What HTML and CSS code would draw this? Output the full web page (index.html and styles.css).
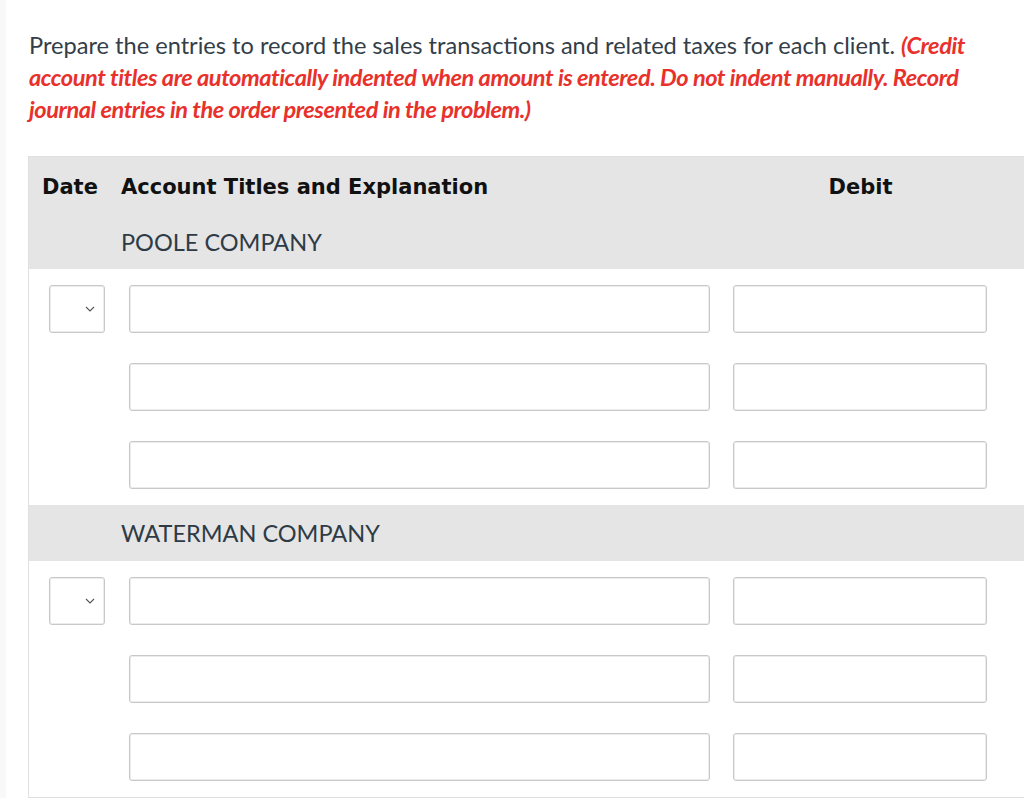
FILE: index.html
```html
<!DOCTYPE html>
<html lang="en">
<head>
<meta charset="utf-8">
<title>Journal entries</title>
<link rel="stylesheet" href="styles.css">
</head>
<body>
<div class="page">
  <p class="instructions">Prepare the entries to record the sales transactions and related taxes for each client. <em class="note">(Credit account titles are automatically indented when amount is entered. Do not indent manually. Record journal entries in the order presented in the problem.)</em></p>

  <div class="journal">
    <div class="head">
      <div class="grid labels">
        <div class="h-date">Date</div>
        <div class="h-account">Account Titles and Explanation</div>
        <div class="h-debit">Debit</div>
        <div class="h-credit">Credit</div>
      </div>
      <div class="company">POOLE COMPANY</div>
    </div>
    <div class="rows">
      <div class="grid row">
        <div class="select"><svg class="chev" viewBox="0 0 10 6" width="10" height="6"><path d="M1 1 L5 5 L9 1" fill="none" stroke="#555" stroke-width="1.1"/></svg></div>
        <div class="box"></div><div class="box"></div><div class="box"></div>
      </div>
      <div class="grid row">
        <div></div>
        <div class="box"></div><div class="box"></div><div class="box"></div>
      </div>
      <div class="grid row">
        <div></div>
        <div class="box"></div><div class="box"></div><div class="box"></div>
      </div>
    </div>
    <div class="section">
      <div class="company">WATERMAN COMPANY</div>
    </div>
    <div class="rows">
      <div class="grid row">
        <div class="select"><svg class="chev" viewBox="0 0 10 6" width="10" height="6"><path d="M1 1 L5 5 L9 1" fill="none" stroke="#555" stroke-width="1.1"/></svg></div>
        <div class="box"></div><div class="box"></div><div class="box"></div>
      </div>
      <div class="grid row">
        <div></div>
        <div class="box"></div><div class="box"></div><div class="box"></div>
      </div>
      <div class="grid row">
        <div></div>
        <div class="box"></div><div class="box"></div><div class="box"></div>
      </div>
    </div>
  </div>
</div>
</body>
</html>
```

FILE: styles.css
```css
html, body {
  margin: 0;
  padding: 0;
  background: #ffffff;
}
body {
  overflow: hidden;
  border-left: 6px solid #f8f8f8;
}
.page {
  padding: 29px 0 0 22px;
  width: 1200px;
}
.instructions {
  margin: 0 0 31px 1px;
  width: 948px;
  font-family: Lato, "Liberation Sans", sans-serif;
  font-size: 23.6px;
  line-height: 32px;
  color: #333e48;
}
.note {
  font-style: italic;
  font-weight: bold;
  color: #e8312b;
  letter-spacing: -0.45px;
}
.journal {
  border: 1px solid #e0e0e0;
  width: 1100px;
}
.head, .section {
  background: #e5e5e5;
}
.grid {
  display: grid;
  grid-template-columns: 56px 581px 253px 253px;
  column-gap: 24px;
  padding-left: 20px;
}
.labels {
  height: 57px;
  align-items: center;
  padding-top: 1px;
  font-family: "DejaVu Sans", Verdana, sans-serif;
  font-weight: bold;
  font-size: 21px;
  color: #111111;
}
.h-date { margin-left: -7px; }
.h-account { margin-left: -8px; white-space: nowrap; }
.h-debit, .h-credit { text-align: center; }
.h-credit { margin-left: 14px; }
.company {
  height: 54px;
  display: flex;
  align-items: center;
  padding-left: 92px;
  font-family: Lato, "Liberation Sans", sans-serif;
  font-size: 23.5px;
  color: #2e3b46;
}
.section .company {
  height: 56px;
}
.rows {
  display: flex;
  flex-direction: column;
  gap: 30px;
  padding: 16px 0 16px 0;
}
.row {
  height: 48px;
}
.row .box:nth-child(3) { margin-left: -1px; }
.row .box:nth-child(4) { margin-left: 13px; }
.box, .select {
  box-sizing: border-box;
  height: 48px;
  border: 1px solid #c8c8c8;
  border-radius: 3px;
  background: #ffffff;
  box-shadow: inset 0 0 0 1px #ececec;
}
.select {
  display: flex;
  align-items: center;
  justify-content: flex-end;
  padding-right: 9px;
}
.chev {
  display: block;
}
```
